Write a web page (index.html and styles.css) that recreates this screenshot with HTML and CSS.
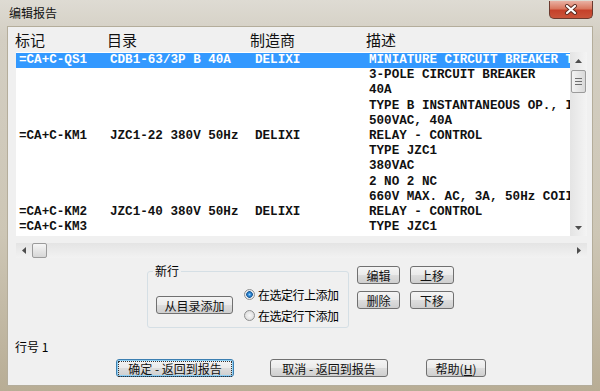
FILE: index.html
```html
<!DOCTYPE html>
<html>
<head>
    <title>编辑报告</title>
    <link rel="stylesheet" href="styles.css">
</head>
<body>
<div class="window">
    <div class="titlebar">
        <span class="title">编辑报告</span>
        <div class="close">
            <svg width="14" height="11" viewBox="0 0 14 11">
                <path d="M3 2 L11 9 M11 2 L3 9" stroke="#5a2a20" stroke-width="4" stroke-linecap="round"/>
                <path d="M3 2 L11 9 M11 2 L3 9" stroke="#fff" stroke-width="2.2" stroke-linecap="round"/>
            </svg>
        </div>
    </div>

    <div class="client">
        <div class="cols-head">
            <span>标记</span><span>目录</span><span>制造商</span><span>描述</span>
        </div>

        <div class="list">
            <div class="rows">
                <div class="line selected"><span>=CA+C-QS1</span><span>CDB1-63/3P B 40A</span><span>DELIXI</span><span>MINIATURE CIRCUIT BREAKER T</span></div>
                <div class="line"><span></span><span></span><span></span><span>3-POLE CIRCUIT BREAKER</span></div>
                <div class="line"><span></span><span></span><span></span><span>40A</span></div>
                <div class="line"><span></span><span></span><span></span><span>TYPE B INSTANTANEOUS OP., I</span></div>
                <div class="line"><span></span><span></span><span></span><span>500VAC, 40A</span></div>
                <div class="line"><span>=CA+C-KM1</span><span>JZC1-22 380V 50Hz</span><span>DELIXI</span><span>RELAY - CONTROL</span></div>
                <div class="line"><span></span><span></span><span></span><span>TYPE JZC1</span></div>
                <div class="line"><span></span><span></span><span></span><span>380VAC</span></div>
                <div class="line"><span></span><span></span><span></span><span>2 NO 2 NC</span></div>
                <div class="line"><span></span><span></span><span></span><span>660V MAX. AC, 3A, 50Hz COII</span></div>
                <div class="line"><span>=CA+C-KM2</span><span>JZC1-40 380V 50Hz</span><span>DELIXI</span><span>RELAY - CONTROL</span></div>
                <div class="line"><span>=CA+C-KM3</span><span></span><span></span><span>TYPE JZC1</span></div>
            </div>
            <div class="vscroll">
                <div class="arrow">
                    <svg width="7" height="4" viewBox="0 0 7 4"><polygon points="0,4 7,4 3.5,0" fill="#4d4d4d"/></svg>
                </div>
                <div class="thumb-v"><i></i><i></i><i></i></div>
                <div class="arrow arrow-down">
                    <svg width="7" height="4" viewBox="0 0 7 4"><polygon points="0,0 7,0 3.5,4" fill="#4d4d4d"/></svg>
                </div>
            </div>
        </div>

        <div class="hscroll">
            <div class="arrow-h">
                <svg width="4" height="7" viewBox="0 0 4 7"><polygon points="4,0 4,7 0,3.5" fill="#4d4d4d"/></svg>
            </div>
            <div class="thumb-h"></div>
            <div class="arrow-h arrow-right">
                <svg width="4" height="7" viewBox="0 0 4 7"><polygon points="0,0 0,7 4,3.5" fill="#4d4d4d"/></svg>
            </div>
        </div>

        <div class="lower">
            <fieldset class="group">
                <legend>新行</legend>
                <div class="group-body">
                    <button class="btn btn-catalog">从目录添加</button>
                    <div class="radios">
                        <label class="radio-row"><span class="radio checked"></span>在选定行上添加</label>
                        <label class="radio-row"><span class="radio"></span>在选定行下添加</label>
                    </div>
                </div>
            </fieldset>
            <div class="edit-btns">
                <button class="btn">编辑</button>
                <button class="btn">上移</button>
                <button class="btn">删除</button>
                <button class="btn">下移</button>
            </div>
        </div>

        <div class="rowno">行号 1</div>

        <div class="actions">
            <button class="btn btn-wide btn-default"><span class="focus">确定 - 返回到报告</span></button>
            <button class="btn btn-wide btn-cancel">取消 - 返回到报告</button>
            <button class="btn btn-help">帮助(<u>H</u>)</button>
        </div>
    </div>
</div>
</body>
</html>
```

FILE: styles.css
```css
body {
    margin: 0;
    width: 600px;
    height: 391px;
    overflow: hidden;
    font-family: "Noto Sans CJK SC", sans-serif;
    font-size: 12px;
    color: #000;
}

.window {
    height: 391px;
    box-sizing: border-box;
    display: flex;
    flex-direction: column;
    padding: 0 8px 6px 8px;
    background: linear-gradient(to bottom, #dedbd3 0%, #d3cec2 10%, #cdc6b5 60%, #b8ad95 100%);
}

/* barre de titre */
.titlebar {
    height: 27px;
    display: flex;
    align-items: flex-start;
}

.title {
    margin: 5px 0 0 1px;
    line-height: 16px;
    color: #111;
}

.close {
    margin: 1px -1px 0 auto;
    width: 44px;
    height: 18px;
    box-sizing: border-box;
    border: 1px solid #6b3a2e;
    border-top: none;
    border-radius: 0 0 5px 5px;
    background: linear-gradient(to bottom, #e9b1a3 0%, #d9775f 45%, #c5412a 55%, #c9543a 100%);
    display: flex;
    align-items: center;
    justify-content: center;
}

/* zone client */
.client {
    flex: 1;
    background: #f0f0f0;
    box-shadow: 0 0 0 1px #b4ad9b;
}

.cols-head {
    height: 25px;
    display: flex;
    padding-left: 7px;
    font-size: 15px;
    line-height: 25px;
    color: #111;
}

.cols-head span:nth-child(1) { width: 92px; }
.cols-head span:nth-child(2) { width: 143px; }
.cols-head span:nth-child(3) { width: 116px; }

.list {
    margin-left: 8px;
    width: 571px;
    height: 184px;
    display: flex;
    background: #fff;
}

.rows {
    flex: 1;
    overflow: hidden;
    padding-top: 1px;
    font-family: "Liberation Mono", monospace;
    font-weight: bold;
    font-size: 12.6px;
    line-height: 15.2px;
    color: #111;
}

.line {
    display: flex;
    white-space: pre;
    padding-left: 3px;
}

.line span {
    flex: none;
}

.line span:nth-child(1) { width: 91px; }
.line span:nth-child(2) { width: 145px; }
.line span:nth-child(3) { width: 114px; }

.line.selected {
    background: #3399ff;
    color: #fff;
}

/* barres de defilement */
.vscroll {
    width: 17px;
    display: flex;
    flex-direction: column;
    align-items: center;
    background: linear-gradient(to right, #e4e4e4, #f4f4f4);
}

.arrow {
    height: 17px;
    display: flex;
    align-items: center;
    justify-content: center;
}

.arrow-down {
    margin-top: auto;
}

.thumb-v {
    margin-top: 1px;
    width: 15px;
    height: 23px;
    box-sizing: border-box;
    border: 1px solid #9b9b9b;
    border-radius: 2px;
    background: linear-gradient(to right, #f3f3f3, #e6e6e6 50%, #d9d9d9);
    display: flex;
    flex-direction: column;
    align-items: center;
    justify-content: center;
    gap: 2px;
}

.thumb-v i {
    display: block;
    width: 7px;
    height: 1px;
    background: #6f6f6f;
}

.hscroll {
    margin: 7px 0 0 8px;
    width: 571px;
    height: 15px;
    display: flex;
    background: linear-gradient(to bottom, #e4e4e4, #f2f2f2);
}

.arrow-h {
    width: 16px;
    display: flex;
    align-items: center;
    justify-content: center;
}

.arrow-right {
    margin-left: auto;
}

.thumb-h {
    width: 15px;
    box-sizing: border-box;
    border: 1px solid #9b9b9b;
    border-radius: 2px;
    background: linear-gradient(to bottom, #f6f6f6, #e6e6e6 50%, #d6d6d6);
}

/* boutons */
.btn {
    height: 18px;
    box-sizing: border-box;
    padding: 0;
    border: 1px solid #707070;
    border-radius: 3px;
    background: linear-gradient(to bottom, #f4f4f4 0%, #ebebeb 48%, #dddddd 52%, #cfcfcf 100%);
    font-family: "Noto Sans CJK SC", sans-serif;
    font-size: 12px;
    line-height: 15px;
    color: #111;
}

/* groupe nouvelle ligne */
.lower {
    margin-top: 5px;
    display: flex;
    align-items: flex-start;
    padding-left: 139px;
}

.group {
    margin: 0;
    width: 202px;
    height: 65px;
    box-sizing: border-box;
    padding: 5px 0 0 8px;
    border: 1px solid #d5dfe5;
    border-radius: 3px;
}

.group legend {
    margin-left: -3px;
    padding: 0 2px;
    line-height: 16px;
}

.group-body {
    display: flex;
    align-items: center;
}

.btn-catalog {
    width: 77px;
}

.radios {
    margin-left: 11px;
}

.radio-row {
    height: 21px;
    display: flex;
    align-items: center;
    gap: 3px;
    letter-spacing: -0.5px;
}

.radio {
    width: 11px;
    height: 11px;
    box-sizing: border-box;
    border: 1px solid #8e8f8f;
    border-radius: 50%;
    background: radial-gradient(circle, #f7f7f7 0, #dcdcdc 5px);
}

.radio.checked {
    background: radial-gradient(circle, #9bd6ff 0, #2f8ad8 1.5px, #1c5c99 3px, #e2e8ee 3.6px, #f4f4f4 5px);
}

.edit-btns {
    margin: 3px 0 0 8px;
    display: grid;
    grid-template-columns: 43px 44px;
    grid-auto-rows: 18px;
    column-gap: 10px;
    row-gap: 7px;
}

.rowno {
    margin-top: 11px;
    padding-left: 7px;
    line-height: 16px;
}

/* boutons du bas */
.actions {
    margin-top: 4px;
    display: flex;
    padding-left: 108px;
}

.btn-wide {
    width: 118px;
}

.btn-cancel {
    margin-left: 36px;
}

.btn-help {
    margin-left: 38px;
    width: 60px;
}

.btn-default {
    border-color: #3c7fb1;
    box-shadow: inset 0 0 0 1px #8fd0f5;
    padding: 1px;
}

.focus {
    display: block;
    height: 14px;
    border: 1px dotted #333;
    line-height: 13px;
}
```
